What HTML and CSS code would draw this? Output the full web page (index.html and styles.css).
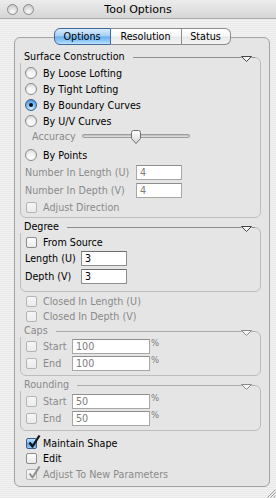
FILE: index.html
```html
<!DOCTYPE html>
<html>
<head>
<meta charset="utf-8">
<link rel="stylesheet" href="styles.css">
</head>
<body>
<div class="window">
  <div class="titlebar">
    <div class="btns"><span class="wbtn"></span><span class="wbtn"></span></div>
    <div class="title">Tool Options</div>
    <div></div>
  </div>
  <div class="content">
    <div class="tabs">
      <div class="tab sel first w57">Options</div>
      <div class="tab w71">Resolution</div>
      <div class="tab last w49">Status</div>
    </div>
    <div class="panel">
      <div class="group g1">
        <div class="ghead"><span class="gt">Surface Construction</span><i class="gl"></i><svg class="tri" viewBox="0 0 11 6"><path d="M0.5 0.5 H10.5 L5.5 5.5 Z" fill="#f4f4f4" stroke="#444" stroke-width="1"/></svg><i class="gl2"></i></div>
        <div class="gbody">
          <div class="row"><span class="radio"></span><span>By Loose Lofting</span></div>
          <div class="row"><span class="radio"></span><span>By Tight Lofting</span></div>
          <div class="row"><span class="radio on"></span><span>By Boundary Curves</span></div>
          <div class="row"><span class="radio"></span><span>By U/V Curves</span></div>
          <div class="row accrow"><span class="dis acclbl">Accuracy</span>
            <div class="slider"><div class="track"></div>
              <svg class="thumb" viewBox="0 0 12 15"><defs><linearGradient id="tg" x1="0" y1="0" x2="0" y2="1"><stop offset="0" stop-color="#ffffff"/><stop offset="1" stop-color="#d4d4d4"/></linearGradient></defs><path d="M1.5 2.5 Q1.5 0.5 3.5 0.5 H8.5 Q10.5 0.5 10.5 2.5 V8.5 L6 13.5 L1.5 8.5 Z" fill="url(#tg)" stroke="#6f6f6f"/></svg>
            </div>
          </div>
          <div class="row mt4"><span class="radio"></span><span>By Points</span></div>
          <div class="row mt1"><span class="dis w111">Number In Length (U)</span><div class="inp dis w46">4</div></div>
          <div class="row mt2"><span class="dis w111">Number In Depth (V)</span><div class="inp dis w46">4</div></div>
          <div class="row mt1"><span class="cb dis"></span><span class="dis">Adjust Direction</span></div>
        </div>
      </div>

      <div class="group g2">
        <div class="ghead"><span class="gt">Degree</span><i class="gl"></i><svg class="tri" viewBox="0 0 11 6"><path d="M0.5 0.5 H10.5 L5.5 5.5 Z" fill="#f4f4f4" stroke="#444" stroke-width="1"/></svg><i class="gl2"></i></div>
        <div class="gbody">
          <div class="row"><span class="cb"></span><span>From Source</span></div>
          <div class="row"><span class="w56">Length (U)</span><div class="inp w46">3</div></div>
          <div class="row mt2"><span class="w56">Depth (V)</span><div class="inp w46">3</div></div>
        </div>
      </div>

      <div class="prow mt2"><span class="cb dis"></span><span class="dis">Closed In Length (U)</span></div>
      <div class="prow"><span class="cb dis"></span><span class="dis">Closed In Depth (V)</span></div>

      <div class="group g3">
        <div class="ghead"><span class="gt dis">Caps</span><i class="gl lt"></i><svg class="tri" viewBox="0 0 11 6"><path d="M0.5 0.5 H10.5 L5.5 5.5 Z" fill="#f4f4f4" stroke="#8a8a8a" stroke-width="1"/></svg><i class="gl2 lt"></i></div>
        <div class="gbody">
          <div class="row"><span class="cb dis"></span><span class="dis w29">Start</span><div class="inp dis w78">100</div><span class="pct">%</span></div>
          <div class="row mt1"><span class="cb dis"></span><span class="dis w29">End</span><div class="inp dis w78">100</div><span class="pct">%</span></div>
        </div>
      </div>

      <div class="group g4">
        <div class="ghead"><span class="gt dis">Rounding</span><i class="gl lt"></i><svg class="tri" viewBox="0 0 11 6"><path d="M0.5 0.5 H10.5 L5.5 5.5 Z" fill="#f4f4f4" stroke="#8a8a8a" stroke-width="1"/></svg><i class="gl2 lt"></i></div>
        <div class="gbody">
          <div class="row"><span class="cb dis"></span><span class="dis w29">Start</span><div class="inp dis w78">50</div><span class="pct">%</span></div>
          <div class="row mt1"><span class="cb dis"></span><span class="dis w29">End</span><div class="inp dis w78">50</div><span class="pct">%</span></div>
        </div>
      </div>

      <div class="prow h16 mt4"><span class="cb on"><svg class="chk" viewBox="0 0 14 15"><path d="M2.5 8.5 L5.5 12.5 L12.5 1.5" fill="none" stroke="#111" stroke-width="2.2" stroke-linejoin="round"/></svg></span><span>Maintain Shape</span></div>
      <div class="prow"><span class="cb"></span><span>Edit</span></div>
      <div class="prow h16"><span class="cb dis"><svg class="chk" viewBox="0 0 14 15"><path d="M2.5 8.5 L5.5 12.5 L12.5 1.5" fill="none" stroke="#8f8f8f" stroke-width="2" stroke-linejoin="round"/></svg></span><span class="dis">Adjust To New Parameters</span></div>
    </div>
  </div>
  <svg class="grip" viewBox="0 0 10 10"><path d="M9.5 1.5 L1.5 9.5 M9.5 4.5 L4.5 9.5 M9.5 7.5 L7.5 9.5" stroke="#9a9a9a" stroke-width="1"/></svg>
</div>
</body>
</html>
```

FILE: styles.css
```css
* { box-sizing: border-box; }
body {
  margin: 0;
  width: 276px;
  height: 498px;
  overflow: hidden;
  font-family: "DejaVu Sans", sans-serif;
  font-size: 9.6px;
  color: #000;
}
.window {
  position: relative;
  width: 276px;
  height: 498px;
  background: repeating-linear-gradient(#f2f2f2 0 1px, #e9e9e9 1px 2px);
}
.titlebar {
  height: 19px;
  display: grid;
  grid-template-columns: 1fr auto 1fr;
  align-items: center;
  background: linear-gradient(#ececec, #d6d6d6);
  border-bottom: 1px solid #ababab;
}
.btns { display: flex; gap: 5px; padding-left: 7px; }
.wbtn {
  width: 11px; height: 11px; border-radius: 50%;
  border: 1px solid #8a8a8a;
  background: radial-gradient(circle at 50% 75%, #fafafa 0, #e2e2e2 45%, #b9b9b9 100%);
}
.title { font-size: 11px; line-height: 13px; }
.content { padding: 9px 6px 0 14px; }
.tabs {
  display: flex;
  justify-content: center;
  height: 17px;
  position: relative;
  z-index: 1;
  margin-bottom: -8px;
}
.tab {
  height: 17px;
  border: 1px solid #8c8c8c;
  border-left: none;
  display: flex;
  align-items: center;
  justify-content: center;
  background: linear-gradient(#ffffff, #f6f6f6 48%, #e8e8e8 52%, #f4f4f4);
}
.tab.first { border-left: 1px solid #8c8c8c; border-radius: 6px 0 0 6px; }
.tab.last { border-radius: 0 6px 6px 0; }
.tab.sel {
  border-color: #41689a;
  background: linear-gradient(#d9ecfd, #a5cff6 46%, #6cb0ef 52%, #8ec8f7 80%, #c0e3fd);
}
.w57 { width: 57px; }
.w71 { width: 71px; }
.w49 { width: 49px; }
.panel {
  height: 450px;
  border: 1px solid #a2a2a2;
  border-radius: 6px;
  background: #e5e5e5;
  padding: 13px 8px 0 5px;
}
.ghead {
  display: flex;
  height: 12px;
  margin-bottom: -6px;
  position: relative;
  z-index: 1;
  padding-right: 6px;
}
.gt {
  background: #e5e5e5;
  padding: 0 8px 0 4px;
  line-height: 12px;
  height: 12px;
}
.gl { flex: 1; height: 1px; margin-top: 6px; background: #8d8d8d; }
.gl2 { width: 3px; height: 1px; margin-top: 6px; background: #8d8d8d; }
.gl.lt, .gl2.lt { background: #ababab; }
.tri { width: 11px; height: 6px; margin-top: 5px; display: block; }
.gbody {
  border: 1px solid #bcbcbc;
  border-radius: 6px;
  padding-left: 4px;
}
.g1 .gbody { padding-top: 7px; padding-bottom: 2px; }
.g2 { margin-top: 3px; }
.g2 .gbody { padding-top: 6px; padding-bottom: 7px; }
.g3 { margin-top: 1px; }
.g3 .gbody { padding-top: 6px; padding-bottom: 4px; }
.g4 { margin-top: 3px; }
.g4 .gbody { padding-top: 7px; padding-bottom: 4px; }
.row { display: flex; align-items: center; height: 16px; }
.accrow { height: 14px; }
.prow { display: flex; align-items: center; height: 15px; padding-left: 5px; }
.prow.h16 { height: 16px; }
.mt1 { margin-top: 1px; }
.mt2 { margin-top: 2px; }
.mt4 { margin-top: 4px; }
.dis { color: #8a8a8a; }
.w111 { width: 111px; }
.w56 { width: 56px; }
.w29 { width: 29px; }
.w46 { width: 46px; }
.w78 { width: 78px; }
.radio {
  width: 12px; height: 12px; flex: none;
  border-radius: 50%;
  border: 1px solid #8b8b8b;
  margin-right: 6px;
  background: radial-gradient(circle at 50% 80%, #ffffff 0, #f3f3f3 45%, #cfcfcf 100%);
}
.radio.on {
  border-color: #3a5d8c;
  background: radial-gradient(circle at 50% 80%, #d4eeff 0, #78baf3 50%, #3c86d8 100%);
  display: flex; align-items: center; justify-content: center;
}
.radio.on::after {
  content: "";
  width: 4px; height: 4px; border-radius: 50%;
  background: #111;
}
.cb {
  position: relative;
  width: 11px; height: 11px; flex: none;
  border: 1px solid #8c8c8c;
  border-radius: 2px;
  margin: 0 6px 0 1px;
  background: linear-gradient(#fdfdfd, #ebebeb);
}
.cb.dis { border-color: #b4b4b4; background: linear-gradient(#f6f6f6, #ebebeb); }
.cb.on {
  border-color: #385c8c;
  background: linear-gradient(#c4e3fd, #74b6f2 48%, #4c98e4 52%, #9bd0f9);
}
.chk { position: absolute; left: 0; top: -5px; width: 14px; height: 15px; }
.acclbl { padding-left: 7px; }
.slider { position: relative; width: 108px; height: 14px; margin-left: 6px; display: flex; align-items: center; }
.track {
  width: 100%; height: 4px; margin-top: -1px;
  border-radius: 2px;
  border: 1px solid #9d9d9d;
  background: linear-gradient(#b9b9b9, #e6e6e6);
}
.thumb { position: absolute; left: 48px; top: 1px; width: 12px; height: 15px; }
.inp {
  height: 15px;
  border: 1px solid #8f8f8f;
  border-top-color: #6e6e6e;
  background: #fff;
  padding-left: 3px;
  display: flex;
  align-items: center;
  color: #000;
}
.inp.dis { color: #7c7c7c; border-color: #a7a7a7; border-top-color: #8f8f8f; }
.pct { align-self: flex-start; font-size: 8.5px; line-height: 10px; margin-left: 1px; color: #7c7c7c; }
.grip { position: absolute; right: 0; bottom: 0; width: 10px; height: 10px; }
```
